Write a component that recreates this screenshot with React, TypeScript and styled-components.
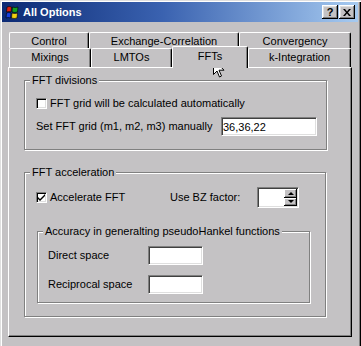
import React from "react";
import styled, { createGlobalStyle } from "styled-components";

const face = "#c4c2c4";

const GlobalStyle = createGlobalStyle`
  html, body {
    margin: 0;
    padding: 0;
    background: ${face};
  }
  body {
    font-family: "Liberation Sans", Arial, sans-serif;
    font-size: 11px;
    color: #000;
  }
`;

const Window = styled.div`
  position: relative;
  width: 361px;
  height: 346px;
  box-sizing: border-box;
  padding: 2px 3px 0 2px;
  background: ${face};
  overflow: hidden;
  box-shadow: inset 1px 1px #dfdfdf, inset 2px 2px #fff, inset -1px 0 #000,
    inset -2px 0 #808080;
`;

const TitleBar = styled.div`
  display: flex;
  align-items: center;
  height: 20px;
  padding: 0 3px 0 3px;
  background: linear-gradient(90deg, #0c2a74 0%, #3a62b0 45%, #a6caf0 100%);
`;

const Title = styled.span`
  flex: 1;
  margin-left: 4px;
  color: #fff;
  font-weight: bold;
  font-size: 11px;
  line-height: 20px;
`;

const CaptionButtons = styled.div`
  display: flex;
  gap: 1px;
`;

const CaptionButton = styled.div`
  width: 16px;
  height: 14px;
  box-sizing: border-box;
  display: flex;
  align-items: center;
  justify-content: center;
  background: ${face};
  font-weight: bold;
  font-size: 11px;
  box-shadow: inset -1px -1px #000, inset 1px 1px #fff, inset -2px -2px #808080,
    inset 2px 2px #dfdfdf;
`;

const Body = styled.div`
  padding: 10px 5px 0 6px;
`;

const TabRow = styled.div<{ $front?: boolean }>`
  display: flex;
  align-items: flex-end;
  margin-left: 1px;
  height: ${(p) => (p.$front ? 19 : 16)}px;
`;

const Tab = styled.div<{ $w: number; $active?: boolean }>`
  position: relative;
  z-index: ${(p) => (p.$active ? 2 : 0)};
  width: ${(p) => p.$w}px;
  height: ${(p) => (p.$active ? 22 : 16)}px;
  margin-bottom: ${(p) => (p.$active ? -1 : 0)}px;
  box-sizing: border-box;
  display: flex;
  align-items: center;
  justify-content: center;
  padding-bottom: ${(p) => (p.$active ? 3 : 0)}px;
  background: ${face};
  border-top: 1px solid #fff;
  border-left: 1px solid #fff;
  border-right: 1px solid #000;
  border-radius: 2px 2px 0 0;
  box-shadow: inset -1px 0 #808080;
`;

const FrontTab = styled(Tab)`
  height: ${(p) => (p.$active ? 22 : 19)}px;
  padding-bottom: ${(p) => (p.$active ? 4 : 2)}px;
`;

const Panel = styled.div`
  width: 344px;
  height: 270px;
  box-sizing: border-box;
  padding: 6px 0 0 15px;
  border-top: 1px solid #fff;
  border-left: 1px solid #fff;
  border-right: 1px solid #000;
  border-bottom: 1px solid #000;
  box-shadow: inset -1px -1px #808080;
`;

const Group = styled.fieldset<{ $w: number; $mt?: number; $ml?: number }>`
  width: ${(p) => p.$w}px;
  box-sizing: border-box;
  margin: ${(p) => p.$mt ?? 0}px 0 0 ${(p) => p.$ml ?? 0}px;
  padding: 0;
  min-inline-size: 0;
  border: 1px solid #808080;
  box-shadow: inset 1px 1px #fff, 1px 1px #fff;
`;

const Legend = styled.legend`
  margin-left: 5px;
  padding: 0 2px;
  line-height: 13px;
  font-size: 11px;
  background: ${face};
`;

const GroupBody = styled.div<{ $pad: string }>`
  display: flex;
  flex-direction: column;
  padding: ${(p) => p.$pad};
`;

const Row = styled.div<{ $h: number; $mt?: number }>`
  display: flex;
  align-items: center;
  height: ${(p) => p.$h}px;
  margin-top: ${(p) => p.$mt ?? 0}px;
`;

const Label = styled.span<{ $w?: number }>`
  width: ${(p) => (p.$w ? `${p.$w}px` : "auto")};
  flex-shrink: 0;
  line-height: 13px;
  white-space: nowrap;
`;

const CheckLabel = styled.label<{ $w?: number }>`
  display: flex;
  align-items: center;
  gap: 3px;
  width: ${(p) => (p.$w ? `${p.$w}px` : "auto")};
  flex-shrink: 0;
  line-height: 13px;
  white-space: nowrap;
`;

const CheckBox = styled.span`
  width: 11px;
  height: 11px;
  box-sizing: border-box;
  display: flex;
  align-items: center;
  justify-content: center;
  background: #fff;
  border-top: 1px solid #808080;
  border-left: 1px solid #808080;
  border-right: 1px solid #fff;
  border-bottom: 1px solid #fff;
  box-shadow: inset 1px 1px #000, inset -1px -1px #dfdfdf;
`;

const Field = styled.input<{ $w: number }>`
  width: ${(p) => p.$w}px;
  height: 19px;
  box-sizing: border-box;
  margin: 0;
  padding: 0 0 0 1px;
  font-family: "Liberation Sans", Arial, sans-serif;
  font-size: 11px;
  color: #000;
  background: #fff;
  border-top: 1px solid #808080;
  border-left: 1px solid #808080;
  border-right: 1px solid #fff;
  border-bottom: 1px solid #fff;
  box-shadow: inset 1px 1px #404040, inset -1px -1px #dfdfdf;
  outline: none;
`;

const Spin = styled.div`
  display: flex;
  width: 42px;
  height: 21px;
  box-sizing: border-box;
  margin-left: 17px;
  background: #fff;
  border-top: 1px solid #808080;
  border-left: 1px solid #808080;
  border-right: 1px solid #fff;
  border-bottom: 1px solid #fff;
  box-shadow: inset 1px 1px #404040, inset -1px -1px #dfdfdf;
  padding: 1px;
`;

const SpinField = styled.div`
  flex: 1;
`;

const SpinButtons = styled.div`
  display: flex;
  flex-direction: column;
  width: 13px;
`;

const SpinButton = styled.div`
  flex: 1;
  display: flex;
  align-items: center;
  justify-content: center;
  background: ${face};
  box-shadow: inset -1px -1px #000, inset 1px 1px #fff, inset -2px -2px #808080;
`;

const Arrow = styled.span<{ $up?: boolean }>`
  width: 0;
  height: 0;
  border-left: 3px solid transparent;
  border-right: 3px solid transparent;
  ${(p) => (p.$up ? "border-bottom: 3px solid #000;" : "border-top: 3px solid #000;")}
`;

const Pointer = styled.svg`
  position: absolute;
  left: 213px;
  top: 59px;
`;

function AppIcon() {
  return (
    <svg width="14" height="13" viewBox="0 0 14 13">
      <path d="M2 1 Q4 0 6.5 1 L6 6 Q4 5 1.5 6 Z" fill="#e02010" stroke="#000" strokeWidth="0.6" />
      <path d="M7.5 1 Q10 2 13 1 L12.5 6 Q10 7 7 6 Z" fill="#10a020" stroke="#000" strokeWidth="0.6" />
      <path d="M1.5 7 Q4 6 6 7 L5.5 12 Q3 11 1 12 Z" fill="#1840e0" stroke="#000" strokeWidth="0.6" />
      <path d="M7 7 Q10 8 12.5 7 L12 12 Q9.5 13 6.5 12 Z" fill="#f0d010" stroke="#000" strokeWidth="0.6" />
    </svg>
  );
}

function Check({ on }: { on?: boolean }) {
  return (
    <CheckBox>
      {on && (
        <svg width="7" height="7" viewBox="0 0 7 7">
          <path d="M0 3 L2 5 L7 0 L7 2 L2 7 L0 5 Z" fill="#000" />
        </svg>
      )}
    </CheckBox>
  );
}

export default function App() {
  return (
    <>
      <GlobalStyle />
      <Window>
        <TitleBar>
          <AppIcon />
          <Title>All Options</Title>
          <CaptionButtons>
            <CaptionButton>?</CaptionButton>
            <CaptionButton>
              <svg width="8" height="7" viewBox="0 0 8 7">
                <path d="M0 0 L2 0 L4 2.5 L6 0 L8 0 L5 3.5 L8 7 L6 7 L4 4.5 L2 7 L0 7 L3 3.5 Z" fill="#000" />
              </svg>
            </CaptionButton>
          </CaptionButtons>
        </TitleBar>

        <Body>
          <TabRow>
            <Tab $w={80}>Control</Tab>
            <Tab $w={150}>Exchange-Correlation</Tab>
            <Tab $w={112}>Convergency</Tab>
          </TabRow>
          <TabRow $front>
            <FrontTab $w={82}>Mixings</FrontTab>
            <FrontTab $w={81}>LMTOs</FrontTab>
            <FrontTab $w={76} $active>
              FFTs
            </FrontTab>
            <FrontTab $w={103}>k-Integration</FrontTab>
          </TabRow>

          <Panel>
            <Group $w={303}>
              <Legend>FFT divisions</Legend>
              <GroupBody $pad="10px 0 13px 11px">
                <Row $h={13}>
                  <CheckLabel>
                    <Check />
                    FFT grid will be calculated automatically
                  </CheckLabel>
                </Row>
                <Row $h={19} $mt={7}>
                  <Label $w={185}>Set FFT grid (m1, m2, m3) manually</Label>
                  <Field $w={96} readOnly value="36,36,22" />
                </Row>
              </GroupBody>
            </Group>

            <Group $w={302} $mt={16}>
              <Legend>FFT acceleration</Legend>
              <GroupBody $pad="8px 0 13px 11px">
                <Row $h={21}>
                  <CheckLabel $w={134}>
                    <Check on />
                    Accelerate FFT
                  </CheckLabel>
                  <Label>Use BZ factor:</Label>
                  <Spin>
                    <SpinField />
                    <SpinButtons>
                      <SpinButton>
                        <Arrow $up />
                      </SpinButton>
                      <SpinButton>
                        <Arrow />
                      </SpinButton>
                    </SpinButtons>
                  </Spin>
                </Row>

                <Group $w={273} $mt={17} $ml={1}>
                  <Legend>Accuracy in generalting pseudoHankel functions</Legend>
                  <GroupBody $pad="8px 0 8px 10px">
                    <Row $h={19}>
                      <Label $w={100}>Direct space</Label>
                      <Field $w={55} readOnly value="" />
                    </Row>
                    <Row $h={19} $mt={10}>
                      <Label $w={100}>Reciprocal space</Label>
                      <Field $w={55} readOnly value="" />
                    </Row>
                  </GroupBody>
                </Group>
              </GroupBody>
            </Group>
          </Panel>
        </Body>

        <Pointer width="12" height="19" viewBox="0 0 12 19">
          <path d="M0.5 0.5 L0.5 15.5 L4 12 L6.5 18 L8.5 17 L6 11.2 L11 11.2 Z" fill="#fff" stroke="#000" strokeWidth="1" />
        </Pointer>
      </Window>
    </>
  );
}
